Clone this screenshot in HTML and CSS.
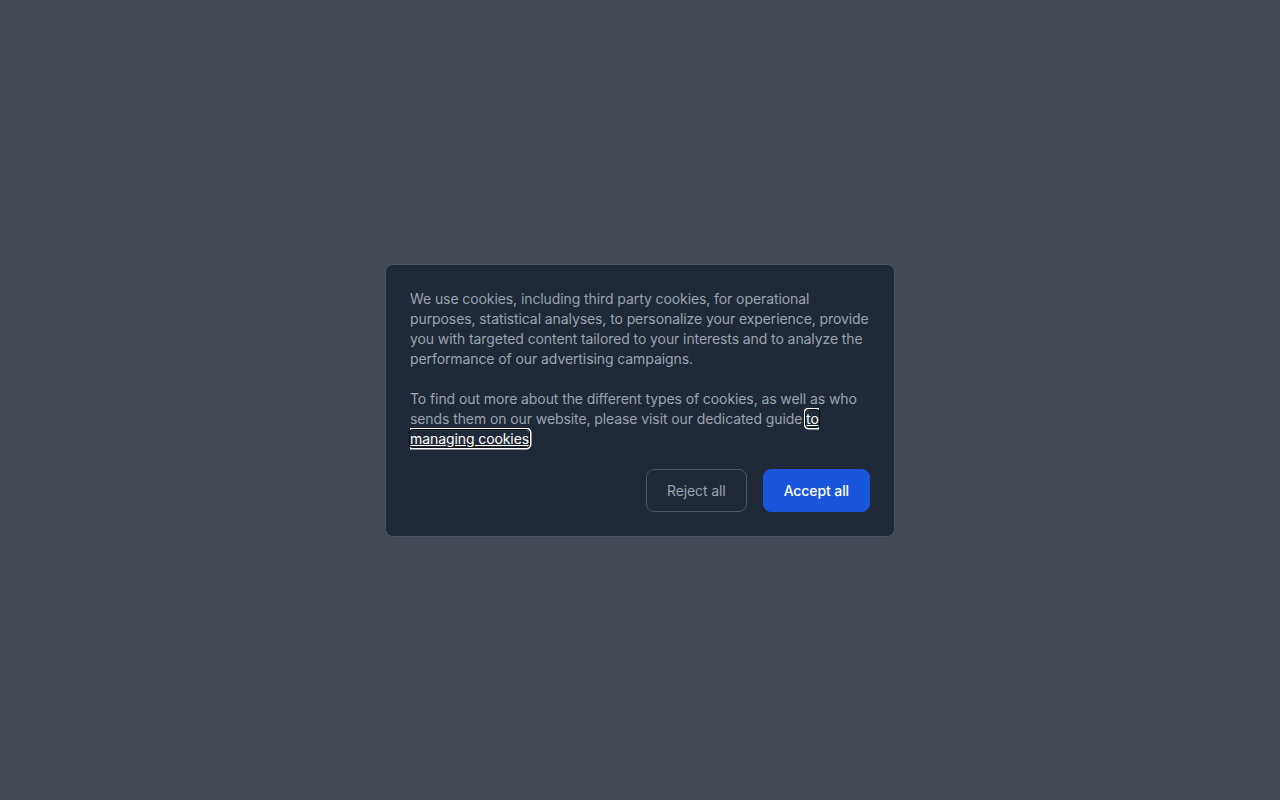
FILE: index.html
```html
<!DOCTYPE html>
<html lang="en">
<head>
<meta charset="utf-8">
<title>Cookies</title>
<link rel="stylesheet" href="styles.css">
</head>
<body>
<div class="overlay">
  <div class="card" role="dialog">
    <p class="text">We use cookies, including third party cookies, for operational purposes, statistical analyses, to personalize your experience, provide you with targeted content tailored to your interests and to analyze the performance of our advertising campaigns.</p>
    <p class="text">To find out more about the different types of cookies, as well as who sends them on our website, please visit our dedicated guide <a class="link" href="#">to managing cookies</a></p>
    <div class="actions">
      <button class="btn btn-reject" type="button">Reject all</button>
      <button class="btn btn-accept" type="button">Accept all</button>
    </div>
  </div>
</div>
</body>
</html>
```
FILE: styles.css
```css
* { box-sizing: border-box; }
html, body { margin: 0; padding: 0; }
body {
  background: #434955;
  font-family: Inter, "Noto Sans", sans-serif;
  -webkit-font-smoothing: antialiased;
}
.overlay {
  width: 100%;
  height: 100vh;
  display: flex;
  align-items: center;
  justify-content: center;
}
.card {
  width: 510px;
  margin-top: 1px;
  background: #1f2937;
  border: 1px solid #4b5563;
  border-radius: 8px;
  padding: 24px 24px 24px;
}
.text {
  margin: 0 0 20px;
  font-size: 14px;
  line-height: 20px;
  letter-spacing: -0.09px;
  color: #9ca3af;
}
.link {
  color: #ffffff;
  text-decoration: underline;
  border-radius: 3px;
  outline: 1px solid #101010;
  box-shadow: 0 0 0 2.5px #ffffff;
}
.actions {
  display: flex;
  justify-content: flex-end;
  gap: 16px;
}
.btn {
  font-family: Inter, "Noto Sans", sans-serif;
  font-size: 14px;
  line-height: 21px;
  letter-spacing: -0.1px;
  font-weight: 500;
  padding: 10px 20px;
  border-radius: 8px;
  cursor: pointer;
}
.btn-reject {
  background: transparent;
  border: 1px solid #4b5563;
  color: #9ca3af;
  font-weight: 400;
}
.btn-accept {
  background: #1a56db;
  border: 1px solid #1a56db;
  color: #ffffff;
}
```
